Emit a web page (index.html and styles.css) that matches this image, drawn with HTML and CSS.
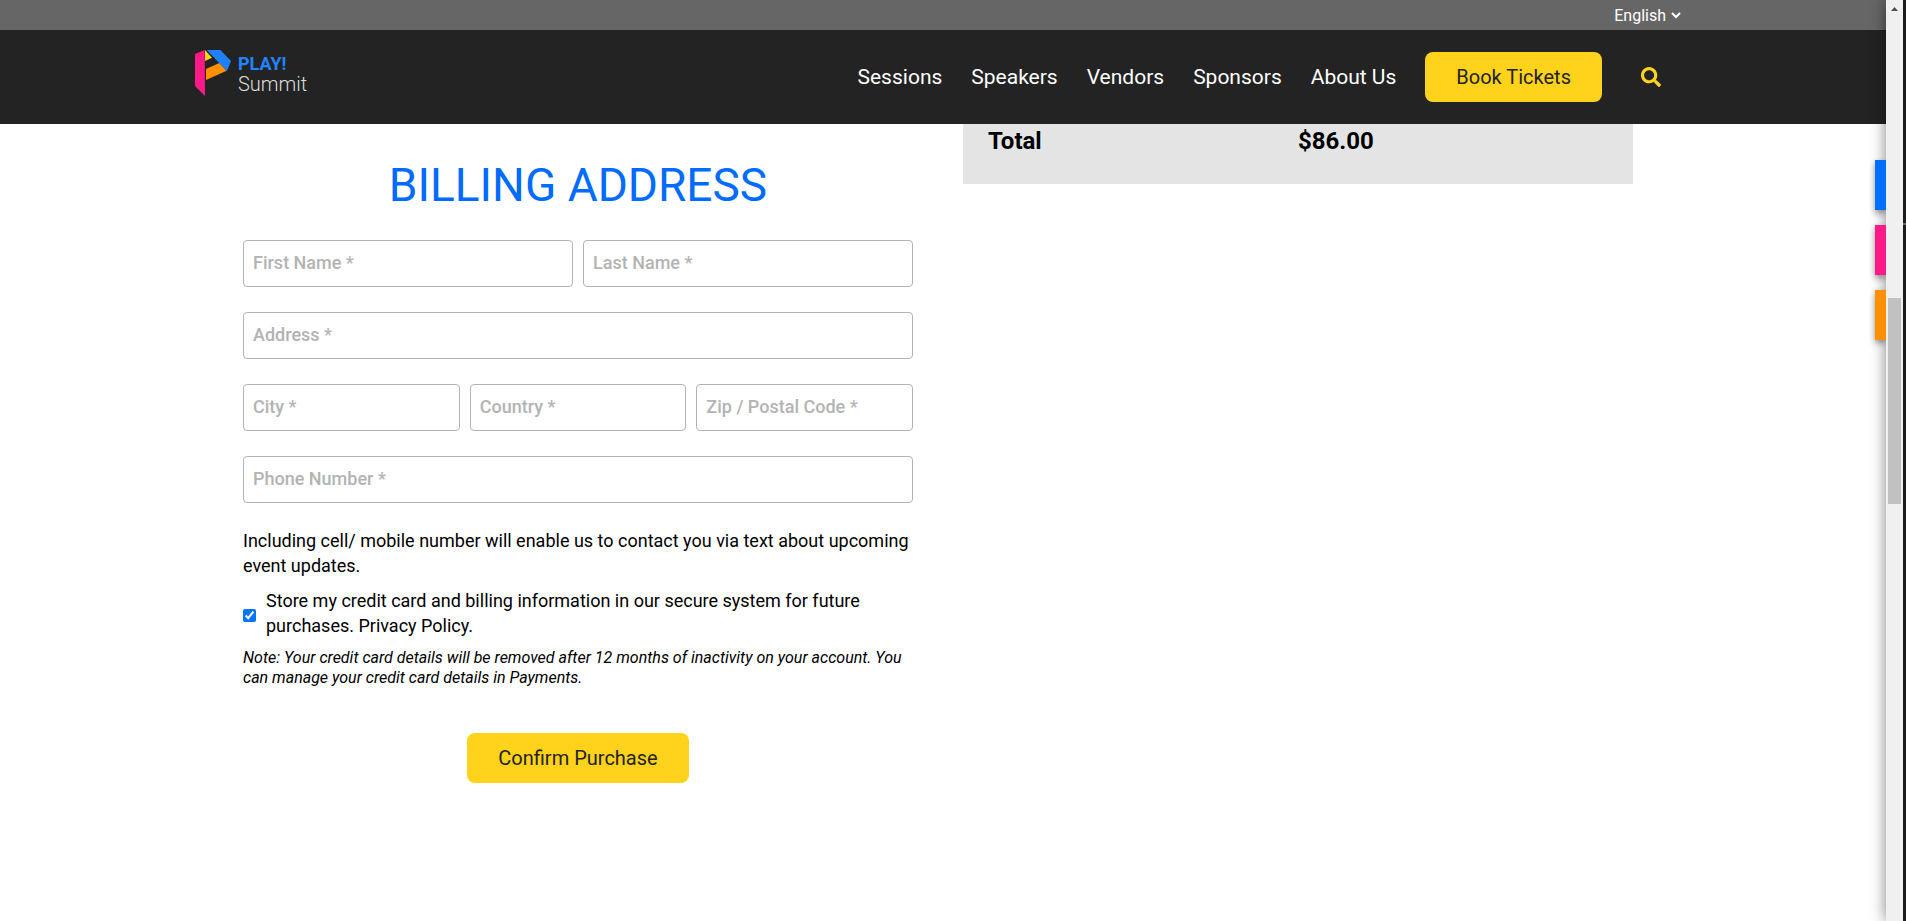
FILE: index.html
```html
<!DOCTYPE html>
<html lang="en">
<head>
<meta charset="utf-8">
<title>PLAY! Summit</title>
<link rel="stylesheet" href="styles.css">
</head>
<body>
<div class="page">
  <div class="topbar">
    <div class="container topbar-inner">
      <select class="language" aria-label="Language"><option>English</option></select>
      <svg class="chevron" viewBox="0 0 10 8" aria-hidden="true"><path d="M1 2l4 4 4-4" fill="none" stroke="#fff" stroke-width="2"/></svg>
    </div>
  </div>
  <header class="header">
    <div class="container header-inner">
      <a class="logo" href="#">
        <svg class="logo-mark" viewBox="45 60 108 138" aria-hidden="true">
          <path fill="#ff1a87" d="M45 72l29-12 1 138-30-30z"/>
          <path fill="#ffd41c" d="M75 60l21 23-21 10z"/>
          <path fill="#ff9000" d="M78 117l40-18 22 23-62 28z"/>
          <path fill="#1f80ff" d="M80 60h41l32 33-12 30z"/>
        </svg>
        <span class="logo-text"><b class="logo-play">PLAY!</b><span class="logo-summit">Summit</span></span>
      </a>
      <nav class="nav">
        <a href="#">Sessions</a>
        <a href="#">Speakers</a>
        <a href="#">Vendors</a>
        <a href="#">Sponsors</a>
        <a href="#">About Us</a>
        <a class="button button-book" href="#">Book Tickets</a>
        <button class="search" type="button" aria-label="Search">
          <svg viewBox="0 0 512 512" aria-hidden="true"><path fill="#ffd41c" d="M505 442.700L405.300 343c-4.500-4.500-10.600-7-17-7H372c27.600-35.300 44-79.700 44-128C416 93.100 322.900 0 208 0S0 93.100 0 208s93.100 208 208 208c48.300 0 92.700-16.400 128-44v16.300c0 6.400 2.500 12.500 7 17l99.700 99.700c9.400 9.400 24.600 9.400 33.900 0l28.300-28.300c9.400-9.400 9.400-24.600.1-34zM208 336c-70.700 0-128-57.200-128-128 0-70.700 57.200-128 128-128 70.700 0 128 57.200 128 128 0 70.700-57.200 128-128 128z"/></svg>
        </button>
      </nav>
    </div>
  </header>
  <main class="content">
    <form class="billing">
      <h2 class="title">BILLING ADDRESS</h2>
      <div class="row">
        <input class="field" type="text" placeholder="First Name *" aria-label="First Name">
        <input class="field" type="text" placeholder="Last Name *" aria-label="Last Name">
      </div>
      <div class="row"><input class="field" type="text" placeholder="Address *" aria-label="Address"></div>
      <div class="row">
        <input class="field" type="text" placeholder="City *" aria-label="City">
        <input class="field" type="text" placeholder="Country *" aria-label="Country">
        <input class="field" type="text" placeholder="Zip / Postal Code *" aria-label="Zip / Postal Code">
      </div>
      <div class="row"><input class="field" type="tel" placeholder="Phone Number *" aria-label="Phone Number"></div>
      <p class="hint">Including cell/ mobile number will enable us to contact you via text about upcoming event updates.</p>
      <div class="store">
        <input class="check" id="store" type="checkbox" checked>
        <label for="store">Store my credit card and billing information in our secure system for future purchases. Privacy Policy.</label>
      </div>
      <p class="note">Note: Your credit card details will be removed after 12 months of inactivity on your account. You can manage your credit card details in Payments.</p>
      <button class="button" type="submit">Confirm Purchase</button>
    </form>
    <aside class="summary">
      <span>Total</span><span>$86.00</span>
    </aside>
  </main>
  <div class="tabs">
    <a class="tab tab-blue" href="#" aria-label="Visit details"></a>
    <a class="tab tab-pink" href="#" aria-label="Profile"></a>
    <a class="tab tab-orange" href="#" aria-label="Events"></a>
  </div>
</div>
<div class="scrollbar">
  <svg class="scroll-up" viewBox="0 0 7 4" aria-hidden="true"><path fill="#505050" d="M3.500 0L7 4H0z"/></svg>
  <div class="thumb"></div>
</div>
<div class="edge"></div>
</body>
</html>
```
FILE: styles.css
```css
* { box-sizing: border-box; }

body {
  margin: 0;
  display: flex;
  height: 100vh;
  overflow: hidden;
  background: #fff;
  color: #000;
  font: 400 18px/25px Roboto, "Liberation Sans", sans-serif;
}

a { color: inherit; text-decoration: none; }
p, h2 { margin: 0; }

.page { position: relative; flex: 1; min-width: 0; }

.container {
  max-width: 1510px;
  margin: 0 auto;
  padding: 0 17px 0 7px;
}

.topbar { background: #666; }
.topbar-inner {
  display: flex;
  justify-content: flex-end;
  align-items: center;
  gap: 5px;
  height: 30px;
}
.language {
  appearance: none;
  field-sizing: content;
  padding: 0;
  border: 0;
  background: none;
  color: #fff;
  font: inherit;
  font-size: 16px;
}
.chevron { width: 10px; height: 8px; }

.header { background: #232323; }
.header-inner {
  display: flex;
  justify-content: space-between;
  align-items: center;
  height: 94px;
}
.logo { display: flex; gap: 7px; padding-bottom: 8px; }
.logo-mark { width: 36px; height: 46px; }
.logo-text {
  display: flex;
  flex-direction: column;
  padding-top: 4px;
  line-height: 20px;
}
.logo-play { color: #1f86ff; font-size: 18px; font-weight: 700; }
.logo-summit { color: #ddd; font-size: 20px; font-weight: 300; }

.nav {
  display: flex;
  align-items: center;
  gap: 29px;
  padding-right: 20px;
  color: #fff;
  font-size: 21px;
}

.button {
  display: block;
  padding: 12px 31px;
  border: 0;
  border-radius: 8px;
  background: #ffd21c;
  color: #232323;
  font: inherit;
  font-size: 20px;
  line-height: 26px;
}
.search {
  margin-left: 10px;
  padding: 0;
  border: 0;
  background: none;
  line-height: 0;
}
.search svg { width: 20px; height: 20px; }

.content {
  display: grid;
  grid-template-columns: repeat(2, minmax(0, 1fr));
  gap: 50px;
  align-items: start;
  max-width: 1400px;
  margin: 0 auto;
  padding-right: 10px;
}

.billing { display: flex; flex-direction: column; padding-top: 33px; }
.title {
  margin-bottom: 27px;
  color: #006bff;
  font-size: 46px;
  font-weight: 400;
  line-height: 56px;
  text-align: center;
}
.row { display: flex; gap: 10px; margin-bottom: 25px; }
.field {
  flex: 1;
  min-width: 0;
  height: 47px;
  padding: 0 9px 2px;
  border: 1px solid #b3b3b3;
  border-radius: 4px;
  background: #fff;
  font: inherit;
  font-weight: 500;
}
.field::placeholder { color: #b3b3b3; }
.hint { margin-bottom: 10px; }
.store {
  display: flex;
  align-items: center;
  gap: 10px;
  margin-bottom: 10px;
}
.check { flex: none; width: 13px; height: 13px; margin: 5px 0 0; accent-color: #0075ff; }
.note { font-size: 16px; font-style: italic; line-height: 20px; }
.billing .button { align-self: center; margin-top: 45px; }

.summary {
  display: grid;
  grid-template-columns: 1fr 1fr;
  padding: 5px 25px 30px;
  background: #e4e4e4;
  font-size: 24px;
  font-weight: 700;
}

.tabs {
  position: absolute;
  z-index: 1;
  top: 160px;
  right: 0;
  display: grid;
  gap: 15px;
  clip-path: inset(-12px 0 -12px -12px);
}
.tab { width: 11px; height: 50px; box-shadow: 0 3px 6px rgba(0, 0, 0, .4); }
.tab-blue { background: #006eff; }
.tab-pink { background: #ff1a87; }
.tab-orange { background: #ff9000; }

.scrollbar {
  position: relative;
  display: flex;
  flex-direction: column;
  align-items: center;
  width: 17px;
  padding-top: 7px;
  background: #f0f0f0;
  box-shadow: 0 0 15px rgba(0, 0, 0, .5);
}
.scroll-up { width: 7px; height: 4px; }
.thumb { width: 13px; height: 206px; margin-top: 287px; background: #c1c1c1; }
.edge { position: relative; width: 3px; background: linear-gradient(#1a1d1b 223px, #666 223px 225px, #1a1d1b 225px); }
```
